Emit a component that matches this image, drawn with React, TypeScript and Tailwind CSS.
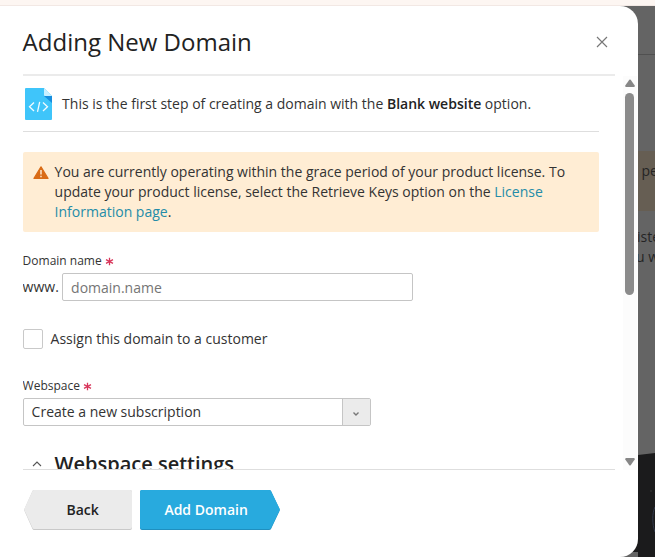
import React from "react";

function Required() {
  return (
    <svg className="h-[9px] w-[9px]" viewBox="0 0 9 9" stroke="#d8355a" strokeWidth="1.3" fill="none">
      <path d="M4.5 .8v7.4M1 2.700l7 3.600M8 2.700l-7 3.600" />
    </svg>
  );
}

function FileIcon() {
  return (
    <svg className="ml-[2px] h-8 w-[27px] shrink-0" viewBox="0 0 27 32">
      <path d="M1 0h18l8 8v23a1 1 0 0 1-1 1H1a1 1 0 0 1-1-1V1a1 1 0 0 1 1-1z" fill="#3fc5fa" />
      <path d="M19 8h8v7z" fill="#168ede" />
      <path d="M19 0l8 8h-7a1 1 0 0 1-1-1z" fill="#c8efff" />
      <path d="M9 14.500l-4.500 4.300L9 23M18 14.500l4.500 4.300L18 23M14.700 13.800l-2.200 10" fill="none" stroke="#f2fbff" strokeWidth="1.3" />
    </svg>
  );
}

function PageBehind() {
  return (
    <div className="flex min-w-0 flex-1 flex-col overflow-hidden whitespace-nowrap text-[14px] leading-5 text-[#242424]">
      <div className="h-[49px] border-b border-[#505050]" />
      <div className="mt-[96px] h-[60px] bg-[#665e53] pt-[10px] pl-[3.5px]">per</div>
      <div className="mt-[16px] -ml-px">iste</div>
      <div className="-ml-[2px]">u w</div>
      <div className="flex-1" />
      <svg className="h-[104px] w-[17px] shrink-0" viewBox="0 0 17 104">
        <path d="M0 2L17 0v104H0z" fill="#1b1b1c" />
        <path d="M17 54c-3 6-3 17 0 25" fill="none" stroke="#30384a" />
        <circle cx="13" cy="38" r=".7" fill="#444" />
      </svg>
    </div>
  );
}

export default function App() {
  return (
    <div className="flex h-[557px] w-[655px] flex-col overflow-hidden bg-[#646464] font-['Open_Sans',sans-serif] text-[14px] text-[#333]">
      <div className="h-[6px] shrink-0 border-b border-[#f2e8e4] bg-[#fdf6f2]" />
      <div className="flex min-h-0 flex-1">
        <div className="flex w-[638px] shrink-0 flex-col bg-[linear-gradient(#646464_0_440px,#1b1b1c_440px_546px,#646464_546px)]">
          <main className="flex min-h-0 flex-1 flex-col overflow-hidden rounded-r-[18px] bg-white pl-[22.6px]">
            <header className="mr-[23px] flex h-[70px] shrink-0 items-center justify-between border-b-2 border-[#ebebeb] pr-[7px] pb-[1px]">
              <h1 className="mt-[5px] text-[24px] leading-8 text-[#222]">Adding New Domain</h1>
              <svg className="mt-[5px] h-3 w-3" viewBox="0 0 12 12" stroke="#777" strokeWidth="1.15" fill="none">
                <path d="M1 1l10 10M11 1L1 11" />
              </svg>
            </header>
            <div className="flex h-[394px] shrink-0">
              <div className="w-[592px] overflow-hidden border-b border-[#dedede]">
                <div className="mr-[16px] flex h-[56px] items-center gap-[10.500px] border-b border-[#dedede]">
                  <FileIcon />
                  <p className="whitespace-nowrap">This is the first step of creating a domain with the <b className="font-semibold text-[#222]">Blank website</b> option.</p>
                </div>
                <div className="mt-5 mr-[16px] flex h-20 rounded-[2px] bg-[#ffedd4] pt-[10px] pl-[10.500px]">
                  <svg className="mt-[3.500px] h-[13px] w-[16px] shrink-0" viewBox="0 0 16 13">
                    <path d="M8 .8L15 12.4H1z" fill="#d96b16" stroke="#d96b16" strokeWidth="1.2" strokeLinejoin="round" />
                    <path d="M8 4v4.600M8 9.800v1.400" stroke="#fff0dc" strokeWidth="1.4" />
                  </svg>
                  <p className="ml-[5.500px] whitespace-nowrap leading-5">
                    You are currently operating within the grace period of your product license. To<br />
                    update your product license, select the Retrieve Keys option on the <a className="text-[#248ca8]">License<br />Information page</a>.
                  </p>
                </div>
                <label className="mt-[21px] flex h-4 items-center gap-[3px] text-[12px]">Domain name <Required /></label>
                <div className="mt-1 flex h-7 items-center">
                  <span className="w-[39.500px] pb-[2px]">www.</span>
                  <div className="flex h-7 w-[350.500px] items-center rounded-[2px] border border-[#c5c5c5] px-2 text-[#757575]">domain.name</div>
                </div>
                <div className="mt-7 flex h-5 items-center gap-2">
                  <div className="h-5 w-5 rounded-[2px] border border-[#c9c9c9]" />
                  <span className="pb-[2px]">Assign this domain to a customer</span>
                </div>
                <label className="mt-[29px] flex h-4 items-center gap-[3px] text-[12px]">Webspace <Required /></label>
                <div className="mt-1 flex h-7 w-[348px] rounded-[2px] border border-[#c5c5c5]">
                  <div className="flex flex-1 items-center pb-[2px] pl-2">Create a new subscription</div>
                  <div className="flex w-7 items-center justify-center border-l border-[#c5c5c5] bg-[#ebebeb]">
                    <svg className="mt-[3px] h-[4px] w-[6px]" viewBox="0 0 6 4" fill="none" stroke="#777" strokeWidth="1.4"><path d="M.5 .5L3 3 5.500 .5" /></svg>
                  </div>
                </div>
                <div className="mt-[24px] flex h-7 items-center">
                  <svg className="ml-[9px] h-[6px] w-[10px]" viewBox="0 0 10 6" fill="none" stroke="#555" strokeWidth="1.1"><path d="M1 5l4-4 4 4" /></svg>
                  <h2 className="ml-[13px] text-[20px] leading-7 font-semibold text-[#222]">Webspace settings</h2>
                </div>
              </div>
              <div className="ml-[8.400px] flex w-[14px] flex-col items-center bg-[#fcfcfc] pt-[3px] pb-[4px]">
                <svg className="h-2 w-[10px]" viewBox="0 0 10 8" fill="#868686"><path d="M4.300.8Q5 0 5.700.8L9.700 6.500Q10 8 9 8H1Q0 8 .3 6.500z" /></svg>
                <div className="mt-[6px] h-[202px] w-[9px] rounded-full bg-[#8b8b8b]" />
                <div className="flex-1" />
                <svg className="h-2 w-[10px]" viewBox="0 0 10 8" fill="#868686"><path d="M4.300 7.200Q5 8 5.700 7.200L9.700 1.500Q10 0 9 0H1Q0 0 .3 1.500z" /></svg>
              </div>
            </div>
            <footer className="mt-[20px] flex gap-2 pl-[1.500px] text-[14px] font-semibold">
              <button className="relative flex h-10 w-[108px] items-center justify-center pb-[2px] pl-[9px] text-[#222]">
                <svg className="absolute inset-0 h-10 w-[108px]" viewBox="0 0 108 40">
                  <path d="M10 0H106q2 0 2 2v36q0 2-2 2H10q-1 0-1.500-1L.5 21q-.5-1 0-2L8.500 1Q9 0 10 0z" fill="#c9c9c9" />
                  <path d="M10 0H106q2 0 2 2v35q0 2-2 2H10q-1 0-1.500-1L.5 20.500q-.5-1 0-2L8.500 1Q9 0 10 0z" fill="#ebebeb" />
                </svg>
                <span className="relative">Back</span>
              </button>
              <button className="relative flex h-10 w-[140px] items-center justify-center pr-[8px] pb-[2px] text-white">
                <svg className="absolute inset-0 h-10 w-[140px]" viewBox="0 0 140 40">
                  <path d="M2 0h127q1.500 0 2 1l8.500 18q.5 1 0 2L131 39q-.5 1-2 1H2q-2 0-2-2V2Q0 0 2 0z" fill="#1f8fbf" />
                  <path d="M2 0h127q1.500 0 2 1l8.500 17.500q.5 1 0 2L131 38q-.5 1-2 1H2q-2 0-2-2V2Q0 0 2 0z" fill="#28aade" />
                </svg>
                <span className="relative">Add Domain</span>
              </button>
            </footer>
          </main>
        </div>
        <PageBehind />
      </div>
    </div>
  );
}
